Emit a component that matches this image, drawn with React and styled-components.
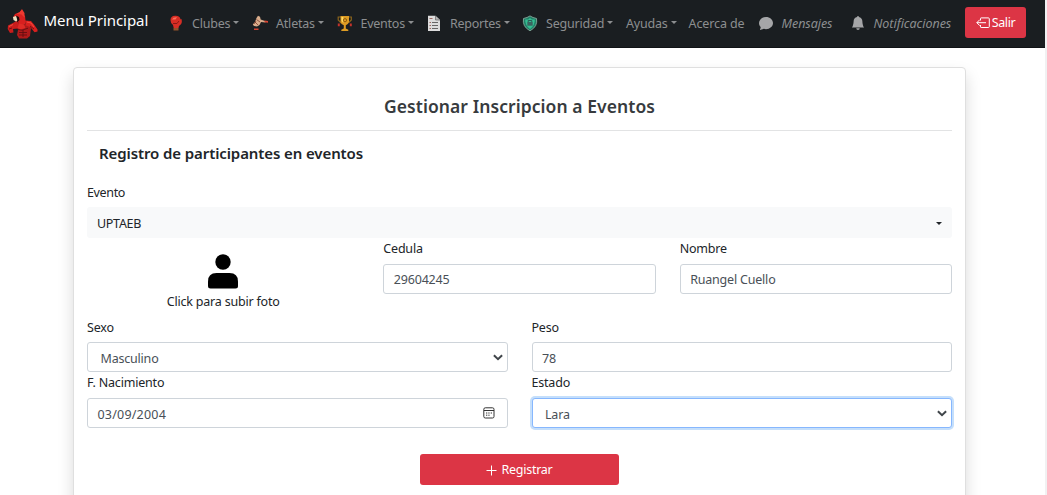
import React from "react";
import styled, { createGlobalStyle } from "styled-components";

const Global = createGlobalStyle`
  * { box-sizing: border-box; }
  html { background: #f1f1f2; overflow: hidden; }
  body { margin: 0; color: #212529; font: 12.5px/20px "Noto Sans", "Open Sans", sans-serif; overflow: hidden; }
  svg { display: block; flex: none; }
`;

const Page = styled.div`
  width: 1045px;
  height: 495px;
  overflow: hidden;
  background: #fff;
`;

const Navbar = styled.nav`
  display: flex;
  align-items: flex-start;
  height: 48px;
  padding-left: 7px;
  background: #1a1e21;
  border-bottom: 1px solid #101316;
`;

const Brand = styled.div`
  display: flex;
  gap: 4.5px;
  width: 161px;
  padding-top: 9px;
  color: #fff;
  font-size: 15px;
  line-height: 22px;
  white-space: nowrap;
`;

const Label = styled.span`
  letter-spacing: ${(p) => p.$ls || 0}px;
  white-space: nowrap;
`;

const NavItem = styled.div`
  display: flex;
  align-items: center;
  width: ${(p) => p.$w}px;
  height: 47px;
  color: #8c8e90;
  font-style: ${(p) => (p.$italic ? "italic" : "normal")};
`;

const IconSlot = styled.span`
  width: 24px;
  flex: none;
  padding-left: ${(p) => (p.$italic ? 1 : 0)}px;
  padding-bottom: ${(p) => (p.$italic ? 2 : 0)}px;
`;

const Caret = styled.i`
  margin-left: 3px;
  margin-top: -2px;
  border: 3px solid transparent;
  border-top-color: currentColor;
  border-bottom: 0;
`;

const DangerButton = styled.button`
  display: flex;
  align-items: center;
  justify-content: center;
  width: ${(p) => p.$w}px;
  height: 31px;
  margin: ${(p) => p.$m};
  padding: ${(p) => p.$pt || 0}px 0 0;
  gap: ${(p) => p.$gap}px;
  border: 0;
  border-radius: 3px;
  background: #dc3545;
  color: #fff;
  font: inherit;
`;

const Card = styled.main`
  width: 893px;
  height: 450px;
  margin: 19px 0 0 73px;
  padding: 0 13px;
  border: 1px solid #dfdfdf;
  border-radius: 4px;
  background: #fff;
  box-shadow: 0 8px 16px rgba(0, 0, 0, 0.15);
`;

const Title = styled.h1`
  height: 63px;
  margin: 0;
  padding-top: 26px;
  border-bottom: 1px solid #e2e3e4;
  color: #373b3e;
  font-size: 17.5px;
  font-weight: 600;
  line-height: 24px;
  text-align: center;
`;

const Subtitle = styled.h2`
  margin: 0;
  padding: 11px 12px 18px;
  font-size: 15px;
  font-weight: 600;
  line-height: 22px;
`;

const Row = styled.div`
  display: grid;
  grid-template-columns: repeat(${(p) => p.$cols}, 1fr);
  column-gap: 24px;
  height: ${(p) => p.$h}px;
`;

const FieldBox = styled.label`
  display: flex;
  flex-direction: column;
  padding-top: 1px;
`;

const Control = styled.div`
  display: flex;
  align-items: center;
  justify-content: space-between;
  height: 30px;
  margin-top: ${(p) => p.$mt ?? 5}px;
  padding: ${(p) => p.$pt ?? 3}px ${(p) => (p.$select ? "4px 0 12.5px" : "12px 0 9.5px")};
  border: 1px solid ${(p) => (p.$focus ? "#86b7fe" : "#ced4da")};
  border-radius: 3px;
  background: #fff;
  color: #495057;
  box-shadow: ${(p) => (p.$focus ? "0 0 0 2px #c5dffb" : "none")};

  svg {
    margin-top: -3px;
  }
`;

const EventSelect = styled.div`
  display: flex;
  align-items: center;
  justify-content: space-between;
  height: 31px;
  margin-top: 4px;
  padding: 3px 10px 0 10px;
  border-radius: 3px;
  background: #f8f9fa;
`;

const Photo = styled.div`
  display: flex;
  flex-direction: column;
  align-items: center;
  padding-top: 16px;
  gap: 3px;
`;

const Mascot = () => (
  <svg width="32" height="30" viewBox="0 0 32 30">
    <path d="M10 17l11-2 3 4-1 8-3 2.500h-8L10 26l1-5z" fill="#b01a1a" />
    <path d="M15 .3l-2.500 3L8 5 6 8.500l5 4 1 4 6-1 .5-4-.5-4.500-1-1z" fill="#d8201f" />
    <path d="M15 .3l-2.500 3-3 1.500 5 .8 3 3V4z" fill="#ee3a30" />
    <path d="M9.500 12L5 14.500 1 16.500.7 20l2.300 4 3.500-.5L6 20l5-.5 3-3z" fill="#c91d1c" />
    <path d="M18 11.500l6 .5 3 3.500 3.500 5v2l-3 .7-4-5-5-2z" fill="#d8201f" />
    <path d="M12 14.500l5 1 1.500 3.500-5 1.500-3-1.500z" fill="#e02b26" />
    <path d="M6 8l3-1 2 1.500V11l-2 1.500L6.500 11z" fill="#ece0c0" />
    <path d="M9 6.500l3 1.500.5 3-2 2-.5-3z" fill="#16090a" />
    <path d="M11 20.500l4 .7 6-2M12 23.500h8M12 26h8M16 21v7M23 17l4 3M2 20l3-1" fill="none" stroke="#5b0d10" strokeWidth=".8" />
    <path d="M2 17.500l4-2M20 13l4 1 3 4" fill="none" stroke="#f44c3e" />
  </svg>
);
const Glove = () => (
  <svg width="15" height="17" viewBox="0 0 15 17">
    <path d="M2.500 5Q2.500 1 7 .8q5-.3 5.500 3.700.5-1 1.200 0Q14.500 9 11 11l-.5 2H5.700L5 10Q2.500 8.500 2.500 5z" fill="#d72e25" />
    <path d="M4 4.500Q5 2 9 2.300L7.500 4.500z" fill="#ff6d5a" />
    <path d="M5 8.500h4l2-2.500" fill="none" stroke="#8a1815" />
    <path d="M5.500 13h5v2.500h-5z" fill="#91502b" />
  </svg>
);
const Athlete = () => (
  <svg width="17" height="17" viewBox="0 0 17 17">
    <path d="M6 .8l2 1 .7 2.700 5 1.800-.3 1.200-4.400-.5-1.500 3L5 11.500 2 11 .8 9.500 3 7 4.500 3z" fill="#d9ad8c" />
    <path d="M3 7l3 3M4.500 4.500L8 7M2 9l2-3" stroke="#7b3b2c" strokeWidth=".8" />
    <path d="M12.500 5.500l3.500.5v1.700l-3.500-.5zM2 13.500h4.500V15H2z" fill="#d74432" />
  </svg>
);
const Trophy = () => (
  <svg width="16" height="17" viewBox="0 0 16 17">
    <path d="M4 2H1.200v3l3 3M11.500 2h2.800v3l-3 3" fill="none" stroke="#8b641c" strokeWidth="1.200" />
    <path d="M3.500 1h8.500v6q-1 2.500-3.200 3.300v3.200l2.500 1.200V16H4.300v-1.300l2.500-1.200v-3.200Q4 9.500 3.500 7z" fill="#dd9c24" />
    <path d="M4.500 2h1.800v6L4.500 6z" fill="#ffdb62" />
    <circle cx="8" cy="5.200" r="1.600" fill="none" stroke="#8d5a0d" />
    <path d="M.8 8.500h2v2.800h-2zM12.800 8.500h2v2.800h-2z" fill="#c5322b" />
  </svg>
);
const Report = () => (
  <svg width="16" height="17" viewBox="0 0 16 17">
    <path d="M2 .7h7.500L14 5v11H2z" fill="#dcdcdc" />
    <path d="M9.500 1v4H14" fill="#b5b5b5" stroke="#666" strokeWidth=".7" />
    <path d="M6 7.500h6M6 10.500h6M6 13.500h6" stroke="#666" />
    <path d="M3.500 3.500h3M3.500 7.500H5M3.500 10.500H5M3.500 13.500H5" stroke="#9c665f" />
  </svg>
);
const Shield = () => (
  <svg width="16" height="17" viewBox="0 0 16 17">
    <path d="M1.500 3.500L5 2.500 8 .9l3 1.600 3.500 1q1.500 8-6.500 12.300Q0 11.500 1.500 3.500z" fill="#207f66" stroke="#83a99b" strokeWidth=".9" />
    <path d="M3.200 4.500h3L8 3l1.800 1.500h3Q13 10.500 8 14 3 10.500 3.200 4.500z" fill="#35bd91" />
    <path d="M5.300 7h5.400v3.700H5.300z" fill="#3b6460" />
    <path d="M6.200 7V5.500h3.600V7" fill="none" stroke="#2b5754" />
  </svg>
);
const Bubble = () => (
  <svg width="14" height="14" viewBox="0 0 16 16" fill="#a5a6a8">
    <path d="M8 15c4.418 0 8-3.134 8-7s-3.582-7-8-7-8 3.134-8 7c0 1.760.743 3.370 1.970 4.600-.097 1.016-.417 2.130-.771 2.966-.079.186.074.394.273.362 2.256-.37 3.597-.938 4.180-1.234A9 9 0 0 0 8 15" />
  </svg>
);
const Bell = () => (
  <svg width="14" height="14" viewBox="0 0 16 16" fill="#a5a6a8">
    <path d="M8 16a2 2 0 0 0 2-2H6a2 2 0 0 0 2 2m.995-14.901a1 1 0 1 0-1.990 0A5 5 0 0 0 3 6c0 1.098-.5 6-2 7h14c-1.500-1-2-5.902-2-7 0-2.420-1.720-4.440-4.005-4.901" />
  </svg>
);
const Exit = () => (
  <svg width="14" height="12" viewBox="0 0 14 12" fill="none" stroke="#fff" strokeWidth="1">
    <path d="M4.500 3.500V1.500Q4.500 .9 5.100 .9H12.400Q13.300 .9 13.300 1.800V9.600Q13.300 10.500 12.400 10.500H5.100Q4.500 10.500 4.500 9.900V8M10 5.700H.9M3.800 2.700L.8 5.700l3 3" />
  </svg>
);
const Plus = () => (
  <svg width="11" height="11" viewBox="0 0 11 11" stroke="#fff">
    <path d="M5.500 .5v10M.5 5.500h10" />
  </svg>
);
const Chevron = () => (
  <svg width="10" height="7" viewBox="0 0 10 7" fill="none" stroke="#40454a" strokeWidth="2">
    <path d="M.9 1.200L5 5.200l4.100-4" />
  </svg>
);
const Calendar = () => (
  <svg width="12" height="12" viewBox="0 0 12 12" fill="none" stroke="#333">
    <rect x=".8" y=".8" width="10.200" height="10.200" rx="1.500" />
    <path d="M1 3.500h10M3 6h1.300M5.300 6h1.300M7.700 6H9M3 8.200h1.300M5.300 8.200h1.300" />
  </svg>
);
const Person = () => (
  <svg width="30" height="35" viewBox="0 0 30 35">
    <circle cx="15" cy="8" r="7.700" />
    <path d="M0 27.500Q0 19 8.500 19h13Q30 19 30 27.500V32q0 2.500-2.500 2.500h-25Q0 34.500 0 32z" />
  </svg>
);

const menu = [
  { text: "Clubes", w: 84, ls: -0.2, icon: <Glove />, caret: true },
  { text: "Atletas", w: 84.5, ls: -0.2, icon: <Athlete />, caret: true },
  { text: "Eventos", w: 89.5, ls: -0.25, icon: <Trophy />, caret: true },
  { text: "Reportes", w: 96, ls: -0.25, icon: <Report />, caret: true },
  { text: "Seguridad", w: 104, ls: -0.2, icon: <Shield />, caret: true },
  { text: "Ayudas", w: 62.5, ls: -0.2, caret: true },
  { text: "Acerca de", w: 69, ls: -0.1 },
  { text: "Mensajes", w: 92, ls: -0.05, icon: <Bubble />, italic: true },
  { text: "Notificaciones", w: 115.5, ls: -0.02, icon: <Bell />, italic: true },
];

const Field = ({ label, value, ls, vls, icon, ...control }) => (
  <FieldBox>
    <Label $ls={ls ?? -0.2}>{label}</Label>
    <Control {...control}>
      <Label $ls={vls ?? -0.2}>{value}</Label>
      {icon}
    </Control>
  </FieldBox>
);

export default function App() {
  return (
    <Page>
      <Global />
      <Navbar>
        <Brand><Mascot /><Label $ls={-0.05}>Menu Principal</Label></Brand>
        {menu.map((m) => (
          <NavItem key={m.text} $w={m.w} $italic={m.italic}>
            {m.icon && <IconSlot $italic={m.italic}>{m.icon}</IconSlot>}
            <Label $ls={m.ls}>{m.text}</Label>
            {m.caret && <Caret />}
          </NavItem>
        ))}
        <DangerButton $w={61} $m="7px 0 0" $gap={2}><Exit /><Label $ls={-0.35}>Salir</Label></DangerButton>
      </Navbar>
      <Card>
        <Title><Label $ls={0.07}>Gestionar Inscripcion a Eventos</Label></Title>
        <Subtitle><Label $ls={-0.1}>Registro de participantes en eventos</Label></Subtitle>
        <FieldBox>
          <Label $ls={-0.35}>Evento</Label>
          <EventSelect><Label $ls={-0.3}>UPTAEB</Label><Caret /></EventSelect>
        </FieldBox>
        <Row $cols={3} $h={79}>
          <Photo><Person /><Label $ls={-0.2}>Click para subir foto</Label></Photo>
          <Field label="Cedula" value="29604245" $pt={2} />
          <Field label="Nombre" value="Ruangel Cuello" $pt={2} />
        </Row>
        <Row $cols={2} $h={55}>
          <Field label="Sexo" value="Masculino" $mt={4} $select icon={<Chevron />} />
          <Field label="Peso" value="78" $mt={4} />
        </Row>
        <Row $cols={2} $h={82}>
          <Field label="F. Nacimiento" value="03/09/2004" vls={0.2} icon={<Calendar />} />
          <Field label="Estado" value="Lara" $select $focus icon={<Chevron />} />
        </Row>
        <DangerButton $w={199} $m="0 auto" $pt={1} $gap={4}><Plus /><Label $ls={-0.25}>Registrar</Label></DangerButton>
      </Card>
    </Page>
  );
}
